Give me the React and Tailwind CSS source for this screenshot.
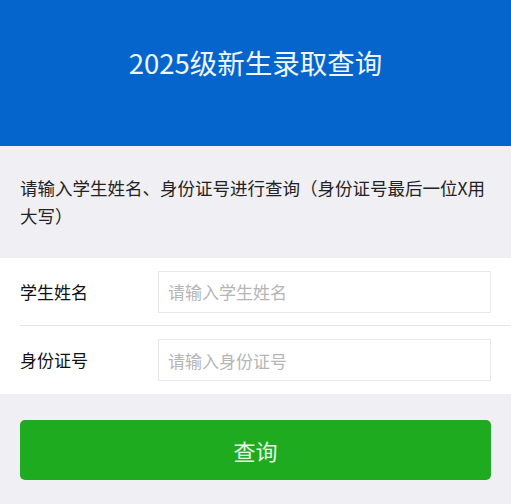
import React from 'react';

const fields = [
  { label: '学生姓名', placeholder: '请输入学生姓名' },
  { label: '身份证号', placeholder: '请输入身份证号' },
];

export default function App() {
  return (
    <div
      className="min-h-[504px] bg-[#efeff4]"
      style={{ fontFamily: '"Noto Sans CJK SC", "Noto Sans", sans-serif' }}
    >
      {/* Header */}
      <div className="h-[146px] bg-[#0565cc] flex items-center justify-center pb-[20px]">
        <h1 className="text-[27.5px] text-[#eef6ff] font-normal leading-none">2025级新生录取查询</h1>
      </div>

      {/* Intro */}
      <div className="px-[20px] py-[28px]">
        <p className="text-[17.5px] leading-[28px] text-[#222]">
          请输入学生姓名、身份证号进行查询（身份证号最后一位X用大写）
        </p>
      </div>

      {/* Form */}
      <div className="bg-white">
        {fields.map((f, i) => (
          <div key={i} className="pl-[20px]">
            <div
              className={
                'flex items-center h-[68px] pr-[20px] ' +
                (i === 0 ? 'border-b border-[#e5e5e5]' : '')
              }
            >
              <label className="w-[138px] text-[17px] text-[#111]">{f.label}</label>
              <input
                className="flex-1 h-[42px] border border-[#e8e8e8] px-[9px] text-[17px] outline-none placeholder:text-[#b5b5b5]"
                placeholder={f.placeholder}
              />
            </div>
          </div>
        ))}
      </div>

      {/* Button */}
      <div className="px-[20px] pt-[26px] pb-[24px]">
        <button className="w-full h-[60px] rounded-[5px] bg-[#1fab1f] text-[#e8fbe8] text-[22px]">
          查询
        </button>
      </div>
    </div>
  );
}
